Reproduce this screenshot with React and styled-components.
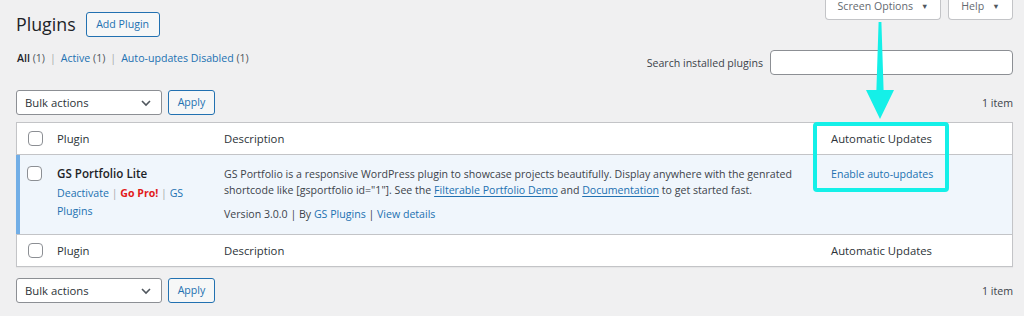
import React from "react";
import styled, { createGlobalStyle } from "styled-components";

const GlobalStyle = createGlobalStyle`
  body {
    margin: 0;
    background: #f0f0f1;
    font-family: "Open Sans", "Noto Sans", sans-serif;
    font-size: 10.6px;
    color: #3c434a;
  }
  * { box-sizing: border-box; }
`;

const Page = styled.div`
  position: relative;
  width: 1024px;
  height: 316px;
  padding: 0 11px 0 16px;
  overflow: hidden;
`;

const TopRow = styled.div`
  display: flex;
  justify-content: space-between;
  align-items: flex-start;
`;

const TitleGroup = styled.div`
  display: flex;
  align-items: center;
  gap: 10px;
  margin-top: 12px;
`;

const Title = styled.h1`
  margin: 0;
  font-size: 17.8px;
  font-weight: 400;
  line-height: 25px;
  color: #1d2327;
`;

const OutlineButton = styled.button`
  height: 25px;
  width: ${(p) => p.$w}px;
  padding: 0;
  border: 1px solid #2271b1;
  border-radius: 3px;
  background: #f6f7f7;
  color: #2271b1;
  font: inherit;
  line-height: 23px;
  cursor: pointer;
`;

const Tabs = styled.div`
  display: flex;
  gap: 7px;
`;

const Tab = styled.div`
  width: ${(p) => p.$w}px;
  height: 20px;
  padding-bottom: 7px;
  display: flex;
  align-items: center;
  justify-content: center;
  gap: 8px;
  background: #fff;
  border: 1px solid #c3c4c7;
  border-top: 0;
  border-radius: 0 0 4px 4px;
  color: #646970;
`;

const Caret = styled.span`
  font-size: 7.5px;
  color: #50575e;
`;

const FilterRow = styled.div`
  display: flex;
  justify-content: space-between;
  align-items: flex-start;
  margin-top: 13px;
`;

const Filters = styled.div`
  display: flex;
  gap: 5px;
  line-height: 16px;
  padding-left: 1px;
  color: #50575e;
`;

const Current = styled.span`
  font-weight: 600;
  color: #1d2327;
`;

const Sep = styled.span`
  color: #a7aaad;
`;

const Link = styled.a`
  color: #2271b1;
  text-decoration: ${(p) => (p.$under ? "underline" : "none")};
  text-underline-offset: 2px;
`;

const SearchBox = styled.div`
  display: flex;
  align-items: center;
  gap: 7px;
  color: #3c434a;
`;

const Input = styled.div`
  width: 243px;
  height: 25px;
  background: #fff;
  border: 1px solid #8c8f94;
  border-radius: 4px;
`;

const TableNav = styled.div`
  display: flex;
  justify-content: space-between;
  align-items: center;
  height: 25px;
  margin-top: ${(p) => p.$top}px;
`;

const NavLeft = styled.div`
  display: flex;
  gap: 6px;
`;

const Select = styled.div`
  width: 146px;
  height: 25px;
  display: flex;
  align-items: center;
  justify-content: space-between;
  padding: 0 9px 0 8px;
  background: #fff;
  border: 1px solid #8c8f94;
  border-radius: 3px;
  font-size: 11.3px;
  color: #2c3338;
`;

const Count = styled.span`
  color: #3c434a;
`;

const Table = styled.div`
  margin-top: 7px;
  background: #fff;
  border: 1px solid #c3c4c7;
  box-shadow: 0 1px 1px rgba(0, 0, 0, 0.04);
`;

const HeadRow = styled.div`
  display: grid;
  grid-template-columns: 30px 167px 1fr 191px;
  align-items: center;
  height: 32px;
  border-top: ${(p) => (p.$foot ? "1px solid #c3c4c7" : "0")};
  border-bottom: ${(p) => (p.$foot ? "0" : "1px solid #c3c4c7")};
  font-size: 11.3px;
  color: #2c3338;
`;

const Cell = styled.div`
  padding: ${(p) => p.$pad || "0 10px"};
  line-height: 16px;
`;

const CheckCell = styled.div`
  padding: ${(p) => (p.$top ? "11px 0 0 11px" : "0 0 0 11px")};
  align-self: ${(p) => (p.$top ? "start" : "center")};
  display: flex;
`;

const Checkbox = styled.span`
  display: block;
  width: 15px;
  height: 15px;
  background: #fff;
  border: 1px solid #8c8f94;
  border-radius: 4px;
`;

const PluginRow = styled.div`
  display: grid;
  grid-template-columns: 31px 167px 1fr 191px;
  margin-left: -1px;
  height: 79px;
  background: #f0f6fc;
  box-shadow: inset 4px 0 0 #72aee6;
  align-items: start;
`;

const PluginName = styled.div`
  font-size: 11.6px;
  font-weight: 600;
  line-height: 21px;
  color: #1d2327;
`;

const RowActions = styled.div`
  line-height: 18px;
  color: #a7aaad;
`;

const GoPro = styled.a`
  color: #e21b1b;
  font-weight: 700;
  text-decoration: none;
`;

const DescText = styled.p`
  margin: 0 0 8px;
  line-height: 16px;
  color: #3c434a;
`;

const Meta = styled.div`
  line-height: 16px;
  color: #3c434a;
`;

const Highlight = styled.div`
  position: absolute;
  left: 813px;
  top: 122px;
  width: 136px;
  height: 70px;
  border: 4px solid #14f0e8;
  border-radius: 4px;
  pointer-events: none;
`;

const Arrow = styled.svg`
  position: absolute;
  left: 862px;
  top: 18px;
  pointer-events: none;
`;

const Chevron = () => (
  <svg width="12" height="12" viewBox="0 0 12 12">
    <path d="M2 4l4 4 4-4" fill="none" stroke="#50575e" strokeWidth="1.6" />
  </svg>
);

const Nav = ({ top, count }) => (
  <TableNav $top={top}>
    <NavLeft>
      <Select>
        <span>Bulk actions</span>
        <Chevron />
      </Select>
      <OutlineButton $w={47}>Apply</OutlineButton>
    </NavLeft>
    <Count>{count}</Count>
  </TableNav>
);

const Header = ({ foot }) => (
  <HeadRow $foot={foot}>
    <CheckCell>
      <Checkbox />
    </CheckCell>
    <Cell>Plugin</Cell>
    <Cell>Description</Cell>
    <Cell>Automatic Updates</Cell>
  </HeadRow>
);

const App = () => {
  return (
    <Page>
      <GlobalStyle />
      <TopRow>
        <TitleGroup>
          <Title>Plugins</Title>
          <OutlineButton $w={74}>Add Plugin</OutlineButton>
        </TitleGroup>
        <Tabs>
          <Tab $w={116}>
            Screen Options <Caret>▼</Caret>
          </Tab>
          <Tab $w={65}>
            Help <Caret>▼</Caret>
          </Tab>
        </Tabs>
      </TopRow>

      <FilterRow>
        <Filters>
          <span>
            <Current>All</Current> (1)
          </span>
          <Sep>|</Sep>
          <span>
            <Link>Active</Link> (1)
          </span>
          <Sep>|</Sep>
          <span>
            <Link>Auto-updates Disabled</Link> (1)
          </span>
        </Filters>
        <SearchBox>
          <span>Search installed plugins</span>
          <Input />
        </SearchBox>
      </FilterRow>

      <Nav top={15} count="1 item" />

      <Table>
        <Header />
        <PluginRow>
          <CheckCell $top>
            <Checkbox />
          </CheckCell>
          <Cell $pad="8px 10px 0">
            <PluginName>GS Portfolio Lite</PluginName>
            <RowActions>
              <Link>Deactivate</Link> | <GoPro>Go Pro!</GoPro> |{" "}
              <Link>GS Plugins</Link>
            </RowActions>
          </Cell>
          <Cell $pad="11px 10px 0">
            <DescText>
              GS Portfolio is a responsive WordPress plugin to showcase projects
              beautifully. Display anywhere with the genrated shortcode like
              [gsportfolio id="1"]. See the{" "}
              <Link $under>Filterable Portfolio Demo</Link> and{" "}
              <Link $under>Documentation</Link> to get started fast.
            </DescText>
            <Meta>
              Version 3.0.0 | By <Link>GS Plugins</Link> | <Link>View details</Link>
            </Meta>
          </Cell>
          <Cell $pad="11px 10px 0">
            <Link>Enable auto-updates</Link>
          </Cell>
        </PluginRow>
        <Header foot />
      </Table>

      <Nav top={11} count="1 item" />

      <Highlight />
      <Arrow width="36" height="104" viewBox="862 18 36 104">
        <polygon
          points="878.6,22 881.4,22 883.6,90 894,90 880,119 866,90 876.4,90"
          fill="#14f0e8"
        />
      </Arrow>
    </Page>
  );
};

export default App;
